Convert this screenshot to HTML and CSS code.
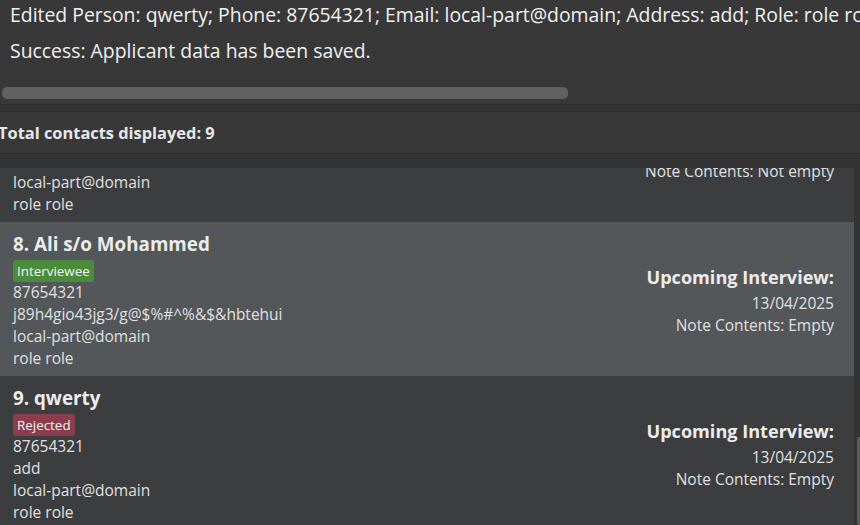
FILE: index.html
```html
<!DOCTYPE html>
<html>
<head>
<meta charset="utf-8">
<link rel="stylesheet" href="styles.css">
</head>
<body>
<div class="app">
  <section class="result">
    <div class="result-text">
      <div class="result-line">Edited Person: qwerty; Phone: 87654321; Email: local-part@domain; Address: add; Role: role role; Tags: [Rejected]</div>
      <div class="result-line">Success: Applicant data has been saved.</div>
    </div>
    <div class="hscroll"><div class="hthumb"></div></div>
  </section>
  <div class="gap"></div>
  <header class="count">Total contacts displayed: 9</header>
  <div class="gap gap-lower"></div>
  <div class="list-wrap">
    <div class="list">
      <div class="list-inner">
        <article class="card">
          <div class="card-left">
            <div class="name">7. Bob Tan</div>
            <div class="tags"><span class="tag tag-green">Interviewee</span></div>
            <div class="field">87654321</div>
            <div class="field">add</div>
            <div class="field">local-part@domain</div>
            <div class="field">role role</div>
          </div>
          <div class="card-right">
            <div class="interview">Upcoming Interview:</div>
            <div class="date">13/04/2025</div>
            <div class="note">Note Contents: Not empty</div>
          </div>
        </article>
        <article class="card card-selected">
          <div class="card-left">
            <div class="name">8. Ali s/o Mohammed</div>
            <div class="tags"><span class="tag tag-green">Interviewee</span></div>
            <div class="field">87654321</div>
            <div class="field">j89h4gio43jg3/g@$%#^%&amp;$&amp;hbtehui</div>
            <div class="field">local-part@domain</div>
            <div class="field">role role</div>
          </div>
          <div class="card-right">
            <div class="interview">Upcoming Interview:</div>
            <div class="date">13/04/2025</div>
            <div class="note">Note Contents: Empty</div>
          </div>
        </article>
        <article class="card">
          <div class="card-left">
            <div class="name">9. qwerty</div>
            <div class="tags"><span class="tag tag-red">Rejected</span></div>
            <div class="field">87654321</div>
            <div class="field">add</div>
            <div class="field">local-part@domain</div>
            <div class="field">role role</div>
          </div>
          <div class="card-right">
            <div class="interview">Upcoming Interview:</div>
            <div class="date">13/04/2025</div>
            <div class="note">Note Contents: Empty</div>
          </div>
        </article>
      </div>
    </div>
    <div class="vscroll"><div class="vthumb"></div></div>
  </div>
</div>
</body>
</html>
```
FILE: styles.css
```css
html, body {
  margin: 0;
  padding: 0;
  background: #383838;
}
body {
  width: 860px;
  height: 525px;
  overflow: hidden;
  font-family: "Open Sans", "Noto Sans", sans-serif;
  color: #e0e0e0;
}
.app {
  display: flex;
  flex-direction: column;
  height: 525px;
}
.result {
  height: 104px;
  background: #383838;
  display: flex;
  flex-direction: column;
  overflow: hidden;
  border-bottom: 1px solid #2b2b2b;
  box-sizing: content-box;
}
.result-text {
  margin-top: -3px;
  padding-left: 10px;
  height: 90px;
  overflow: hidden;
}
.result-line {
  font-size: 19.4px;
  line-height: 36px;
  white-space: nowrap;
  color: #f0f0f0;
}
.hscroll {
  padding-left: 2px;
  height: 12px;
}
.hthumb {
  width: 566px;
  height: 12px;
  border-radius: 5px;
  background: #606060;
}
.gap {
  height: 6px;
  background: #333333;
  border-bottom: 1px solid #2b2b2b;
}
.gap-lower {
  height: 14px;
  border-bottom: none;
}
.count {
  height: 42px;
  box-sizing: border-box;
  padding-top: 2px;
  background: #383838;
  border-bottom: 1px solid #2b2b2b;
  font-weight: 700;
  font-size: 16.4px;
  line-height: 38px;
  color: #e8e8e8;
  margin-left: -2px;
  white-space: nowrap;
}
.list-wrap {
  flex: 1;
  display: flex;
  overflow: hidden;
  background: #333333;
}
.list {
  flex: 1;
  overflow: hidden;
}
.list-inner {
  margin-top: -100px;
}
.card {
  height: 154px;
  box-sizing: border-box;
  display: flex;
  justify-content: space-between;
  padding: 8px 20px 0 13px;
  background: #3c3d3f;
}
.card-selected {
  background: #53575a;
}
.name {
  font-weight: 700;
  font-size: 18.8px;
  line-height: 28px;
  color: #ececec;
}
.tags {
  margin-top: 2px;
  height: 21px;
  display: flex;
}
.tag {
  font-size: 13.4px;
  line-height: 22px;
  height: 22px;
  padding: 0 4px;
  border-radius: 3px;
  color: #f4f4f4;
}
.tag-green {
  background: #4a8c3c;
}
.tag-red {
  background: #8b3c4d;
}
.field {
  font-size: 15.5px;
  line-height: 22px;
  white-space: nowrap;
}
.card-right {
  padding-top: 34px;
  text-align: right;
  display: flex;
  flex-direction: column;
  align-items: flex-end;
}
.interview {
  font-weight: 700;
  font-size: 18.1px;
  line-height: 26px;
  color: #ececec;
}
.date {
  margin-top: 2px;
  font-size: 15.5px;
  line-height: 22px;
}
.note {
  font-size: 15.5px;
  line-height: 22px;
}
.vscroll {
  width: 6px;
  display: flex;
  flex-direction: column;
  align-items: flex-end;
}
.vthumb {
  margin-top: 269px;
  width: 3px;
  height: 100px;
  background: #5a5a5a;
  border-radius: 2px 0 0 2px;
}
```
